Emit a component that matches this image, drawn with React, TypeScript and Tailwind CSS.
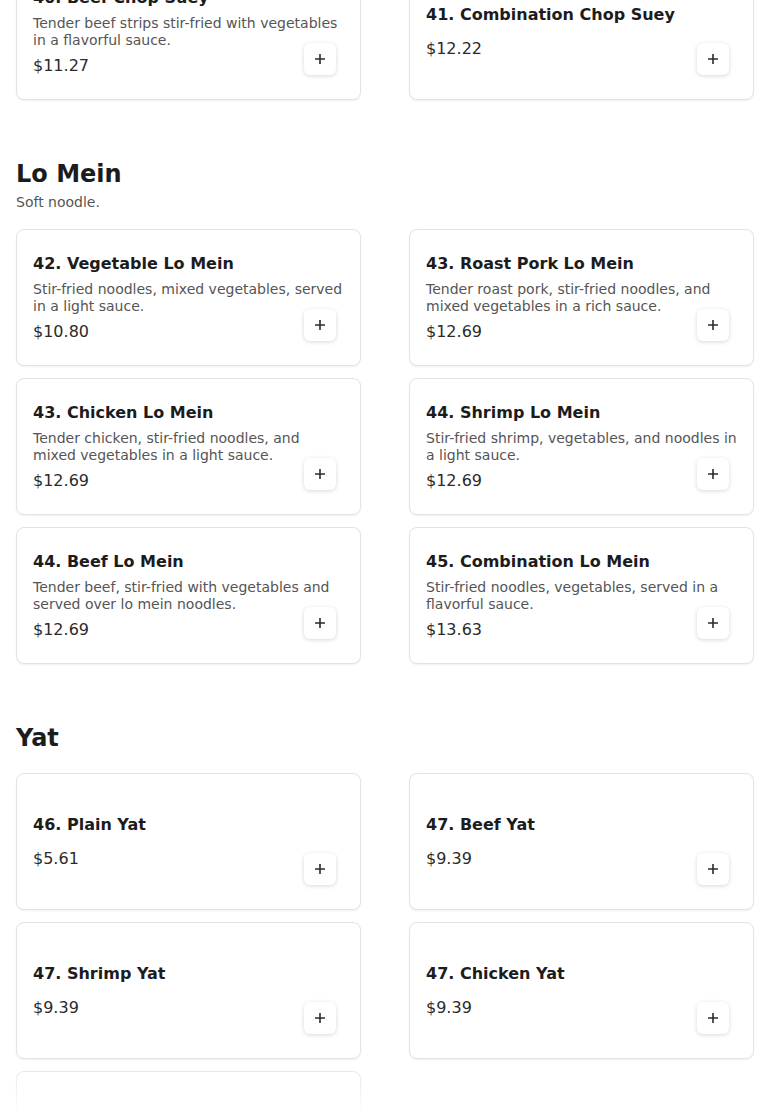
const sections = [
  {
    title: "",
    note: "",
    items: [
      {
        name: "40. Beef Chop Suey",
        desc: "Tender beef strips stir-fried with vegetables in a flavorful sauce.",
        price: "$11.27",
      },
      { name: "41. Combination Chop Suey", desc: "", price: "$12.22" },
    ],
  },
  {
    title: "Lo Mein",
    note: "Soft noodle.",
    items: [
      {
        name: "42. Vegetable Lo Mein",
        desc: "Stir-fried noodles, mixed vegetables, served in a light sauce.",
        price: "$10.80",
      },
      {
        name: "43. Roast Pork Lo Mein",
        desc: "Tender roast pork, stir-fried noodles, and mixed vegetables in a rich sauce.",
        price: "$12.69",
      },
      {
        name: "43. Chicken Lo Mein",
        desc: "Tender chicken, stir-fried noodles, and mixed vegetables in a light sauce.",
        price: "$12.69",
      },
      {
        name: "44. Shrimp Lo Mein",
        desc: "Stir-fried shrimp, vegetables, and noodles in a light sauce.",
        price: "$12.69",
      },
      {
        name: "44. Beef Lo Mein",
        desc: "Tender beef, stir-fried with vegetables and served over lo mein noodles.",
        price: "$12.69",
      },
      {
        name: "45. Combination Lo Mein",
        desc: "Stir-fried noodles, vegetables, served in a flavorful sauce.",
        price: "$13.63",
      },
    ],
  },
  {
    title: "Yat",
    note: "",
    items: [
      { name: "46. Plain Yat", desc: "", price: "$5.61" },
      { name: "47. Beef Yat", desc: "", price: "$9.39" },
      { name: "47. Shrimp Yat", desc: "", price: "$9.39" },
      { name: "47. Chicken Yat", desc: "", price: "$9.39" },
      { name: "48. Roast Pork Yat", desc: "", price: "$9.39" },
    ],
  },
];

type Item = { name: string; desc: string; price: string };

function MenuCard({ item }: { item: Item }) {
  return (
    <div className="relative h-[137px] rounded-lg border border-[#e3e3e3] bg-white shadow-[0_1px_2px_rgba(0,0,0,0.06)] flex items-center px-4">
      <div className="flex flex-col gap-[5px] w-full">
        <h3 className="text-base leading-6 font-bold text-[#1c1c1c]">
          {item.name}
        </h3>
        <p className="text-sm leading-[17px] text-[#555555]">{item.desc}</p>
        <p className="text-base leading-6 text-[#2b2b2b]">{item.price}</p>
      </div>
      {/* add to cart */}
      <button className="absolute right-6 bottom-6 w-8 h-8 rounded-md bg-white shadow-[0_1px_4px_rgba(0,0,0,0.16)] flex items-center justify-center">
        <svg width="12" height="12" viewBox="0 0 12 12">
          <path
            d="M6 1v10M1 6h10"
            stroke="#2b2b2b"
            strokeWidth="1.6"
            fill="none"
          />
        </svg>
      </button>
    </div>
  );
}

export default function App() {
  return (
    <div className="min-h-screen bg-white font-['DejaVu_Sans',sans-serif]">
      <div className="px-4 -mt-[37px] pb-10">
        {sections.map((section, i) => (
          <section key={i} className={i === 0 ? "" : "mt-[58px]"}>
            {section.title && (
              <div className={section.note ? "mb-[17px]" : "mb-[19px]"}>
                <h2
                  className={`text-2xl leading-8 font-bold text-[#1c1c1c] ${
                    section.note ? "mb-[2px]" : "mb-1"
                  }`}
                >
                  {section.title}
                </h2>
                {section.note && (
                  <p className="text-sm leading-5 text-[#555555]">
                    {section.note}
                  </p>
                )}
              </div>
            )}
            <div className="grid grid-cols-2 gap-x-12 gap-y-3">
              {section.items.map((item, j) => (
                <MenuCard key={j} item={item} />
              ))}
            </div>
          </section>
        ))}
      </div>

      {/* bottom fade */}
      <div className="fixed inset-x-0 bottom-0 h-[56px] bg-gradient-to-b from-white/0 to-white pointer-events-none" />
    </div>
  );
}
